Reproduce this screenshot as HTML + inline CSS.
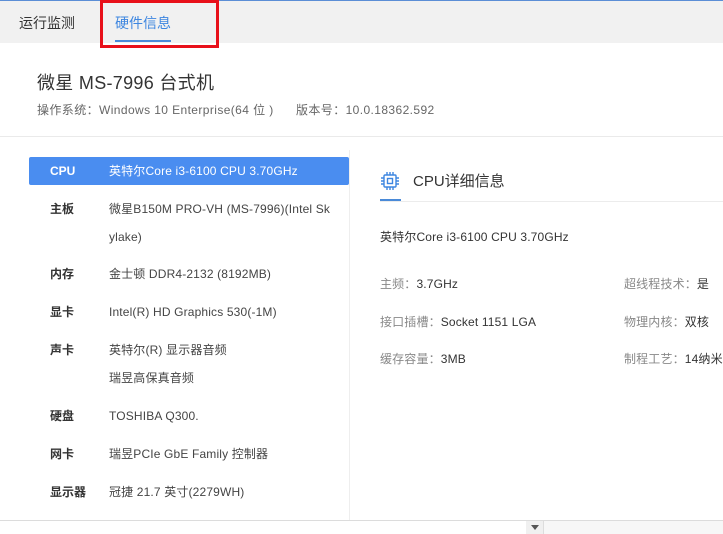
<!DOCTYPE html>
<html><head><meta charset="utf-8"><style>
*{margin:0;padding:0;box-sizing:border-box}
body{width:723px;height:534px;overflow:hidden;background:#fff;font-family:"Liberation Sans","Noto Sans CJK SC",sans-serif;position:relative;color:#333}
.a{position:absolute;white-space:nowrap}
.lab{position:absolute;left:50px;font-size:12px;font-weight:bold;color:#333;line-height:16px}
.val{position:absolute;left:109px;font-size:12px;color:#444;line-height:16px;letter-spacing:0.15px}
.k{position:absolute;font-size:12px;color:#888;line-height:16px;letter-spacing:0.15px}
.k b{font-weight:normal;color:#333}
</style></head><body>
<div class="a" style="left:0;top:0;width:723px;height:43px;background:#f1f1f1;border-top:1px solid #5b8ed6"></div>
<div class="a" style="left:19px;top:13px;font-size:14px;color:#333">运行监测</div>
<div class="a" style="left:115px;top:13px;font-size:14px;color:#3d86e0">硬件信息</div>
<div class="a" style="left:115px;top:40px;width:56px;height:2px;background:#4a8ad8"></div>
<div class="a" style="left:100px;top:0;width:119px;height:48px;border:3px solid #e8101a"></div>
<div class="a" style="left:37px;top:69px;font-size:18px;color:#333;letter-spacing:0.3px">微星 MS-7996 台式机</div>
<div class="a" style="left:37px;top:101px;font-size:12px;color:#666;letter-spacing:0.4px">操作系统：Windows 10 Enterprise(64 位 )&nbsp;&nbsp;&nbsp;&nbsp;&nbsp;&nbsp;版本号：10.0.18362.592</div>
<div class="a" style="left:0;top:136px;width:723px;height:1px;background:#eaeaea"></div>
<div class="a" style="left:349px;top:150px;width:1px;height:370px;background:#eee"></div>
<div class="a" style="left:29px;top:157px;width:320px;height:28px;background:#4a8df0;border-radius:2px"></div>
<div class="lab" style="top:163px;color:#fff">CPU</div>
<div class="val" style="top:163px;color:#fff">英特尔Core i3-6100 CPU 3.70GHz</div>
<div class="lab" style="top:201px">主板</div>
<div class="val" style="top:201px">微星B150M PRO-VH (MS-7996)(Intel Sk</div>
<div class="val" style="top:229px">ylake)</div>
<div class="lab" style="top:266px">内存</div>
<div class="val" style="top:266px">金士顿 DDR4-2132 (8192MB)</div>
<div class="lab" style="top:304px">显卡</div>
<div class="val" style="top:304px">Intel(R) HD Graphics 530(-1M)</div>
<div class="lab" style="top:342px">声卡</div>
<div class="val" style="top:342px">英特尔(R) 显示器音频</div>
<div class="val" style="top:370px">瑞昱高保真音频</div>
<div class="lab" style="top:408px">硬盘</div>
<div class="val" style="top:408px">TOSHIBA Q300.</div>
<div class="lab" style="top:446px">网卡</div>
<div class="val" style="top:446px">瑞昱PCIe GbE Family 控制器</div>
<div class="lab" style="top:484px">显示器</div>
<div class="val" style="top:484px">冠捷 21.7 英寸(2279WH)</div>
<svg class="a" style="left:380px;top:171px" width="20" height="20" viewBox="0 0 20 20" fill="none" stroke="#3d86e0" stroke-width="1.4"><rect x="4" y="4" width="12" height="12" rx="1"/><rect x="7.5" y="7.5" width="5" height="5"/><path d="M7 1v3M10 1v3M13 1v3M7 16v3M10 16v3M13 16v3M1 7h3M1 10h3M1 13h3M16 7h3M16 10h3M16 13h3"/></svg>
<div class="a" style="left:413px;top:170px;font-size:15px;color:#333">CPU详细信息</div>
<div class="a" style="left:380px;top:201px;width:343px;height:1px;background:#ececec"></div>
<div class="a" style="left:380px;top:199px;width:21px;height:2px;background:#4a8ad8"></div>
<div class="a" style="left:380px;top:228px;font-size:12px;color:#333;letter-spacing:0.15px">英特尔Core i3-6100 CPU 3.70GHz</div>
<div class="k" style="left:380px;top:276px">主频：<b>3.7GHz</b></div>
<div class="k" style="left:624px;top:276px">超线程技术：<b>是</b></div>
<div class="k" style="left:380px;top:314px">接口插槽：<b>Socket 1151 LGA</b></div>
<div class="k" style="left:624px;top:314px">物理内核：<b>双核</b></div>
<div class="k" style="left:380px;top:351px">缓存容量：<b>3MB</b></div>
<div class="k" style="left:624px;top:351px;white-space:nowrap">制程工艺：<b>14纳米</b></div>
<div class="a" style="left:0;top:520px;width:723px;height:1px;background:#dcdcdc"></div>
<div class="a" style="left:526px;top:521px;width:17px;height:13px;background:#f0f0f0"></div>
<div class="a" style="left:531px;top:525px;width:0;height:0;border-left:4px solid transparent;border-right:4px solid transparent;border-top:5px solid #555"></div>
<div class="a" style="left:543px;top:521px;width:180px;height:13px;background:#f7f7f7;border-left:1px solid #ddd"></div>
</body></html>
